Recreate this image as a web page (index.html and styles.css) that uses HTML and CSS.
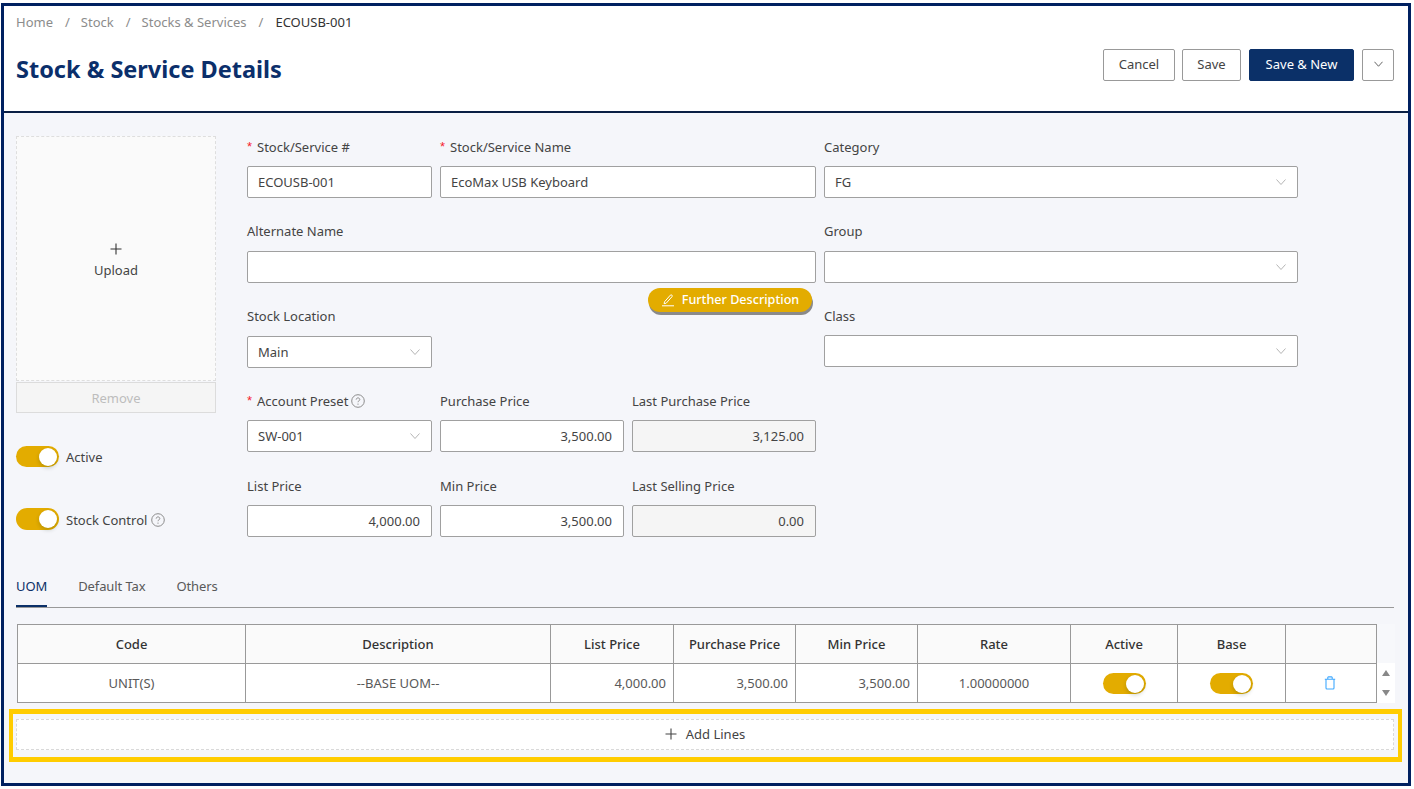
FILE: index.html
```html
<!DOCTYPE html>
<html lang="en">
<head>
<meta charset="utf-8">
<title>Stock &amp; Service Details</title>
<link rel="stylesheet" href="styles.css">
</head>
<body>
<svg class="defs" width="0" height="0" aria-hidden="true">
  <symbol id="chev" viewBox="0 0 10 6"><path d="M.5.5 5 5.5 9.5.5" fill="none" stroke="currentColor" stroke-width="1"/></symbol>
  <symbol id="help" viewBox="0 0 14 14"><circle cx="7" cy="7" r="6.3" fill="none" stroke="currentColor" stroke-width="1"/><path d="M5.2 5.6c0-1 .8-1.7 1.8-1.7s1.8.7 1.8 1.6c0 .8-.5 1.1-1.1 1.5-.5.3-.7.6-.7 1.2" fill="none" stroke="currentColor" stroke-width="1"/><circle cx="7" cy="10.1" r=".7" fill="currentColor"/></symbol>
  <symbol id="plus" viewBox="0 0 12 12"><path d="M6 .5v11M.5 6h11" fill="none" stroke="currentColor" stroke-width="1.1"/></symbol>
</svg>
<div class="frame">
  <header class="head">
    <nav class="crumbs">
      <span class="crumb">Home</span><span class="sep">/</span>
      <span class="crumb">Stock</span><span class="sep">/</span>
      <span class="crumb">Stocks &amp; Services</span><span class="sep">/</span>
      <span class="crumb-now">ECOUSB-001</span>
    </nav>
    <div class="title-row">
      <h1 class="title">Stock &amp; Service Details</h1>
      <div class="actions">
        <button class="btn btn-cancel">Cancel</button>
        <button class="btn btn-save">Save</button>
        <button class="btn btn-primary">Save &amp; New</button>
        <button class="btn btn-more"><svg class="chev-more"><use href="#chev"/></svg></button>
      </div>
    </div>
  </header>
  <main class="content">
    <section class="top">
      <aside class="side">
        <div class="upload">
          <svg class="upload-plus"><use href="#plus"/></svg>
          <span>Upload</span>
        </div>
        <div class="remove">Remove</div>
        <div class="switch-row switch-row-a"><span class="toggle"><span class="knob"></span></span><span>Active</span></div>
        <div class="switch-row switch-row-b"><span class="toggle"><span class="knob"></span></span><span>Stock Control</span><svg class="help"><use href="#help"/></svg></div>
      </aside>
      <div class="fields">
        <div class="grid">
          <div class="field"><label class="label"><i class="req">*</i>Stock/Service #</label><div class="box">ECOUSB-001</div></div>
          <div class="field span2"><label class="label"><i class="req">*</i>Stock/Service Name</label><div class="box">EcoMax USB Keyboard</div></div>
          <div class="field span3"><label class="label">Alternate Name</label><div class="box"></div></div>
          <div class="field"><label class="label">Stock Location</label><div class="box select">Main<svg class="chev"><use href="#chev"/></svg></div></div>
          <div class="further-cell"><button class="further"><svg class="pen" viewBox="0 0 14 14"><path d="M3.5 8.8 9.3 2.2c.5-.5 1.1-.5 1.6-.1.5.4.5 1.1.1 1.6L5.2 10.200l-2.100.5z" fill="none" stroke="currentColor" stroke-width="1"/><path d="M1 12.800h12" stroke="currentColor" stroke-width="1"/></svg>Further Description</button></div>
          <div class="field"><label class="label"><i class="req">*</i>Account Preset<svg class="help help-l"><use href="#help"/></svg></label><div class="box select">SW-001<svg class="chev"><use href="#chev"/></svg></div></div>
          <div class="field"><label class="label">Purchase Price</label><div class="box num">3,500.00</div></div>
          <div class="field"><label class="label">Last Purchase Price</label><div class="box num off">3,125.00</div></div>
          <div class="field"><label class="label">List Price</label><div class="box num">4,000.00</div></div>
          <div class="field"><label class="label">Min Price</label><div class="box num">3,500.00</div></div>
          <div class="field"><label class="label">Last Selling Price</label><div class="box num off">0.00</div></div>
        </div>
        <div class="right-col">
          <div class="field"><label class="label">Category</label><div class="box select">FG<svg class="chev"><use href="#chev"/></svg></div></div>
          <div class="field"><label class="label">Group</label><div class="box select"><svg class="chev"><use href="#chev"/></svg></div></div>
          <div class="field"><label class="label">Class</label><div class="box select"><svg class="chev"><use href="#chev"/></svg></div></div>
        </div>
      </div>
    </section>
    <div class="tabs">
      <span class="tab tab-on">UOM</span>
      <span class="tab">Default Tax</span>
      <span class="tab">Others</span>
    </div>
    <div class="table-wrap">
      <table class="uom">
        <colgroup>
          <col class="c1"><col class="c2"><col class="c3"><col class="c4"><col class="c5"><col class="c6"><col class="c7"><col class="c8"><col class="c9">
        </colgroup>
        <thead>
          <tr><th>Code</th><th>Description</th><th>List Price</th><th>Purchase Price</th><th>Min Price</th><th>Rate</th><th>Active</th><th>Base</th><th></th></tr>
        </thead>
        <tbody>
          <tr>
            <td>UNIT(S)</td>
            <td>--BASE UOM--</td>
            <td class="right">4,000.00</td>
            <td class="right">3,500.00</td>
            <td class="right">3,500.00</td>
            <td>1.00000000</td>
            <td><span class="toggle"><span class="knob"></span></span></td>
            <td><span class="toggle"><span class="knob"></span></span></td>
            <td><svg class="trash" viewBox="0 0 12 14"><path d="M2 3.200h8v8.800a1 1 0 0 1-1 1H3a1 1 0 0 1-1-1zM.8 3.200h10.400M3.800 3V1.500a.6.6 0 0 1 .6-.6h3.200a.6.6 0 0 1 .6.6V3" fill="none" stroke="currentColor" stroke-width="1.100"/></svg></td>
          </tr>
        </tbody>
      </table>
      <div class="scroll">
        <div class="scroll-head"></div>
        <div class="scroll-body"><span class="arrow-up"></span><span class="arrow-down"></span></div>
      </div>
    </div>
    <div class="highlight">
      <button class="add-lines"><svg class="add-plus"><use href="#plus"/></svg>Add Lines</button>
    </div>
  </main>
</div>
</body>
</html>
```
FILE: styles.css
```css
* { box-sizing: border-box; }
html, body { margin: 0; padding: 0; }
body {
  background: #fff;
  color: #444;
  font-family: "Noto Sans", "Open Sans", sans-serif;
  font-size: 13px;
  line-height: 20px;
  padding: 3px 3px 3px 1px;
  height: 789px;
  overflow: hidden;
}
.defs { position: absolute; }
button { font-family: inherit; font-size: inherit; cursor: pointer; }

.frame {
  height: 783px;
  border: 3px solid #002060;
  display: flex;
  flex-direction: column;
  background: #fff;
}

/* header */
.head {
  height: 107px;
  flex: none;
  padding: 6px 14px 0 12px;
  border-bottom: 2px solid #0a1f44;
  background: #fff;
}
.crumbs { display: flex; align-items: center; height: 20px; color: #8c8c8c; }
.sep { margin: 0 11px 0 12px; }
.crumb-now { color: #333; margin-left: 1px; }
.title-row { display: flex; justify-content: space-between; margin-top: 17px; }
.title {
  margin: 5px 0 0;
  font-size: 23.5px;
  line-height: 30px;
  font-weight: 700;
  color: #0b2f6b;
}
.actions { display: flex; gap: 8px; }
.btn {
  height: 32px;
  border: 1px solid #999;
  border-radius: 2px;
  background: #fff;
  color: #444;
  padding: 0 0 2px;
}
.btn-cancel { width: 72px; margin-right: -1px; }
.btn-save { width: 59px; }
.btn-primary { width: 105px; background: #0b3068; border-color: #0b3068; color: #fff; }
.btn-more { width: 32px; display: flex; align-items: center; justify-content: center; }
.chev-more { width: 9px; height: 6px; color: #555; }

/* content */
.content {
  flex: 1;
  background: #f5f6fa;
  padding: 23px 14px 0 12px;
}
.top { display: flex; gap: 31px; height: 401px; }
.side { width: 200px; flex: none; }
.upload {
  height: 245px;
  border: 1px dashed #dedede;
  background: #fafafa;
  display: flex;
  flex-direction: column;
  align-items: center;
  justify-content: center;
  gap: 5px;
  padding-top: 5px;
}
.upload-plus { width: 12px; height: 12px; color: #333; }
.remove {
  margin-top: 1px;
  height: 31px;
  border: 1px solid #dcdcdc;
  background: #f5f5f5;
  color: #bdbdbd;
  display: flex;
  align-items: center;
  justify-content: center;
}
.switch-row { display: flex; align-items: center; height: 22px; }
.switch-row .toggle { margin-right: 7px; align-self: flex-start; }
.switch-row-a { margin-top: 33px; }
.switch-row-b { margin-top: 41px; }
.switch-row-b .toggle { margin-top: -1px; height: 22px; }
.toggle {
  display: inline-block;
  position: relative;
  width: 43px;
  height: 21px;
  border-radius: 11px;
  background: #e3ac00;
  vertical-align: middle;
}
.knob {
  position: absolute;
  top: 1.5px;
  right: 2px;
  width: 18px;
  height: 18px;
  border-radius: 50%;
  background: #fff;
  box-shadow: 0 2px 4px rgba(0, 35, 11, .2);
}
.help { width: 14px; height: 14px; color: #8c8c8c; margin-left: 4px; flex: none; }
.help-l { margin-left: 3px; }

.fields { flex: 1; display: flex; gap: 8px; }
.grid {
  width: 569px;
  flex: none;
  display: grid;
  grid-template-columns: 185px 184px 184px;
  column-gap: 8px;
  grid-auto-rows: 62px;
  row-gap: 22.75px;
}
.right-col {
  width: 474px;
  flex: none;
  display: flex;
  flex-direction: column;
  gap: 22.5px;
}
.field { display: flex; flex-direction: column; position: relative; }
.span2 { grid-column: span 2; }
.span3 { grid-column: span 3; }
.label {
  display: flex;
  align-items: center;
  height: 21px;
  margin-bottom: 9px;
  flex: none;
}
.req { color: #f5222d; font-style: normal; font-family: "Liberation Sans", sans-serif; margin-right: 4px; width: 6px; }
.box {
  height: 32px;
  flex: none;
  border: 1px solid #a0a0a0;
  border-radius: 2px;
  background: #fff;
  padding: 0 11px 0 10px;
  display: flex;
  align-items: center;
  position: relative;
}
.num { justify-content: flex-end; }
.off { background: #f5f5f5; }
.chev {
  position: absolute;
  right: 11px;
  top: 12px;
  width: 10px;
  height: 6px;
  color: #b5b5b5;
}
.further-cell { grid-column: span 2; position: relative; }
.further {
  position: absolute;
  top: -18px;
  right: 4px;
  width: 164px;
  height: 24px;
  border: 0;
  border-radius: 12px;
  background: #e3ac00;
  color: #fff;
  font-size: 12.6px;
  font-weight: 500;
  box-shadow: 1px 3px 0 #8a8a8a;
  display: flex;
  align-items: center;
  justify-content: center;
  gap: 7px;
  padding: 0;
}
.pen { width: 14px; height: 14px; }

/* tabs */
.tabs {
  display: flex;
  gap: 31px;
  height: 41px;
  margin-top: 30px;
  border-bottom: 1px solid #999;
  align-items: center;
  color: #595959;
  padding-bottom: 2px;
}
.tab { position: relative; letter-spacing: -.1px; }
.tab-on { color: #0b3068; }
.tab-on::after {
  content: "";
  position: absolute;
  left: 0;
  right: 0;
  bottom: -11px;
  height: 2px;
  background: #0b3068;
}

/* table */
.table-wrap { display: flex; margin: 16px 0 0 1px; }
.uom {
  width: 1359px;
  table-layout: fixed;
  border-collapse: collapse;
  flex: none;
}
.c1 { width: 228px; }
.c2 { width: 305px; }
.c3 { width: 123px; }
.c4 { width: 122px; }
.c5 { width: 122px; }
.c6 { width: 153px; }
.c7 { width: 107px; }
.c8 { width: 108px; }
.c9 { width: 91px; }
.uom th, .uom td {
  border: 1px solid #999;
  text-align: center;
  padding: 0 7px;
}
.uom th { height: 39px; background: #fafafa; font-weight: 500; color: #333; }
.uom td { height: 39px; background: #fff; color: #595959; }
.uom td.right { text-align: right; }
.trash { width: 12px; height: 14px; color: #40a9ff; vertical-align: middle; margin: -4px 2px 0 0; }
.scroll { width: 18px; flex: none; display: flex; flex-direction: column; }
.scroll-head { height: 39px; background: #f7f8fb; }
.scroll-body {
  flex: 1;
  background: #fff;
  display: flex;
  flex-direction: column;
  align-items: center;
  justify-content: space-between;
  padding: 7px 0 7px;
}
.arrow-up, .arrow-down { width: 0; height: 0; border-left: 4.5px solid transparent; border-right: 4.5px solid transparent; margin-right: 1px; }
.arrow-up { border-bottom: 6px solid #888; }
.arrow-down { border-top: 6px solid #888; }

/* add lines */
.highlight {
  margin: 6px -8px 0 -7px;
  height: 53px;
  border: 5px solid #ffcc00;
  border-width: 5px 4px;
  padding: 5px 4px 7px 3px;
}
.add-lines {
  width: 100%;
  height: 31px;
  border: 1px dashed #d9d9d9;
  background: #fff;
  color: #444;
  display: flex;
  align-items: center;
  justify-content: center;
  gap: 9px;
  padding: 0 0 2px;
}
.add-plus { width: 12px; height: 12px; }
```
